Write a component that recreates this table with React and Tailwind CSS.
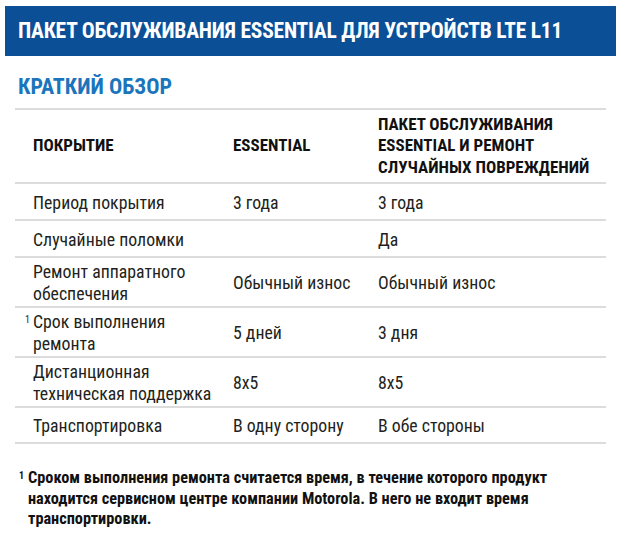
import React from "react";

const rows = [
  { label: ["Период покрытия"], a: "3 года", b: "3 года", h: "h-[37px]" },
  { label: ["Случайные поломки"], a: "", b: "Да", h: "h-[37px]" },
  { label: ["Ремонт аппаратного", "обеспечения"], a: "Обычный износ", b: "Обычный износ", h: "h-[50px]" },
  { label: ["Срок выполнения", "ремонта"], a: "5 дней", b: "3 дня", h: "h-[50px]", note: true },
  { label: ["Дистанционная", "техническая поддержка"], a: "8x5", b: "8x5", h: "h-[50px]" },
  { label: ["Транспортировка"], a: "В одну сторону", b: "В обе стороны", h: "h-[36px]" },
];

export default function App() {
  return (
    <div className="w-[621px] h-[541px] bg-white font-['Roboto_Condensed',sans-serif] text-[#231f20]">
      <div className="pt-[6px] px-[5px]">
        <div className="h-[50px] bg-[#0b4f96] flex items-center pl-[13px]">
          <h1 className="text-white font-bold text-[21.5px] tracking-[-0.2px]">
            ПАКЕТ ОБСЛУЖИВАНИЯ ESSENTIAL ДЛЯ УСТРОЙСТВ LTE L11
          </h1>
        </div>
      </div>

      <h2 className="mt-[18px] ml-[18px] text-[#1a75bc] font-bold text-[22px] leading-[26px]">КРАТКИЙ ОБЗОР</h2>

      <div className="mt-[8px] mx-[15px] border-t-2 border-[#dcdcdc]">
        <div className="grid grid-cols-[218px_145px_1fr] h-[74px] items-center border-b-2 border-[#dcdcdc] font-bold text-[17px] leading-[21.5px] text-[#111]">
          <div className="pl-[18px]">ПОКРЫТИЕ</div>
          <div>ESSENTIAL</div>
          <div>
            ПАКЕТ ОБСЛУЖИВАНИЯ
            <br />
            ESSENTIAL И РЕМОНТ
            <br />
            СЛУЧАЙНЫХ ПОВРЕЖДЕНИЙ
          </div>
        </div>

        {rows.map((r, i) => (
          <div
            key={i}
            className={`grid grid-cols-[218px_145px_1fr] items-center border-b-2 border-[#dcdcdc] text-[17.8px] leading-[22px] pt-[2px] ${r.h}`}
          >
            <div className="pl-[18px] relative">
              {r.note && <span className="absolute left-[10px] top-[-2px] text-[10px]">1</span>}
              {r.label.map((l, j) => (
                <div key={j}>{l}</div>
              ))}
            </div>
            <div>{r.a}</div>
            <div>{r.b}</div>
          </div>
        ))}
      </div>

      <div className="mt-[24px] ml-[19px] flex font-bold text-[16.3px] leading-[20.5px] text-[#111]">
        <span className="w-[9px] text-[10px] leading-[16px]">1</span>
        <p className="w-[540px]">
          Сроком выполнения ремонта считается время, в течение которого продукт находится сервисном центре
          компании Motorola. В него не входит время транспортировки.
        </p>
      </div>
    </div>
  );
}
